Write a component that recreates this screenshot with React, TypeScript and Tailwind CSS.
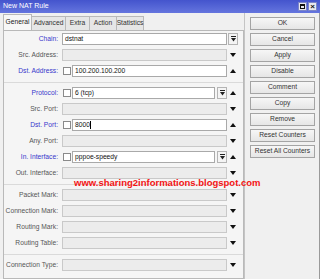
import React from 'react';

type Tail = 'up' | 'down' | 'box';

type Row = {
  label: string;
  blue?: boolean;
  check?: boolean;
  value?: string;
  combo?: boolean;
  caret?: boolean;
  tail: Tail;
};

const groups: Row[][] = [
  [
    { label: 'Chain:', blue: true, value: 'dstnat', tail: 'box' },
    { label: 'Src. Address:', tail: 'down' },
    { label: 'Dst. Address:', blue: true, check: true, value: '100.200.100.200', tail: 'up' },
  ],
  [
    { label: 'Protocol:', blue: true, check: true, value: '6 (tcp)', combo: true, tail: 'up' },
    { label: 'Src. Port:', tail: 'down' },
    { label: 'Dst. Port:', blue: true, check: true, value: '8000', caret: true, tail: 'up' },
    { label: 'Any. Port:', tail: 'down' },
    { label: 'In. Interface:', blue: true, check: true, value: 'pppoe-speedy', combo: true, tail: 'up' },
    { label: 'Out. Interface:', tail: 'down' },
  ],
  [
    { label: 'Packet Mark:', tail: 'down' },
    { label: 'Connection Mark:', tail: 'down' },
    { label: 'Routing Mark:', tail: 'down' },
    { label: 'Routing Table:', tail: 'down' },
  ],
  [{ label: 'Connection Type:', tail: 'down' }],
];

const tabs = [
  { name: 'General', w: 'w-[29px]' },
  { name: 'Advanced', w: 'w-[35px]' },
  { name: 'Extra', w: 'w-[25px]' },
  { name: 'Action', w: 'w-[28px]' },
  { name: 'Statistics', w: 'w-[28px]' },
];

const buttons = ['OK', 'Cancel', 'Apply', 'Disable', 'Comment', 'Copy', 'Remove', 'Reset Counters', 'Reset All Counters'];

function Tri({ up }: { up?: boolean }) {
  return (
    <svg width="6" height="4" viewBox="0 0 6 4" className="ml-[3px] shrink-0">
      <path d={up ? 'M0 4 L3 0 L6 4 Z' : 'M0 0 L6 0 L3 4 Z'} fill="#111" />
    </svg>
  );
}

function ComboBox({ className }: { className: string }) {
  return (
    <div className={`h-[12px] w-[10px] shrink-0 border border-[#b4b4b4] bg-[#f4f4f4] flex items-center justify-center ${className}`}>
      <svg width="5" height="6" viewBox="0 0 5 6">
        <rect x="0" y="0" width="5" height="1" fill="#222" />
        <path d="M0 2 L5 2 L2.5 5.5 Z" fill="#222" />
      </svg>
    </div>
  );
}

function FieldRow({ row }: { row: Row }) {
  const enabled = !!row.value;
  const width = row.check ? (row.combo ? 'w-[143px]' : 'w-[155px]') : 'w-[165px]';
  return (
    <div className="flex h-[12px] items-center">
      <div className={`w-[55px] text-right pr-[1px] leading-[12px] ${row.blue ? 'text-[#3838cc]' : 'text-[#555]'}`}>
        {row.label}
      </div>
      {row.check ? (
        <div className="ml-[4px] h-[8px] w-[8px] shrink-0 border border-[#8a8a8a] bg-white" />
      ) : null}
      <div
        className={`${row.check ? 'ml-[1px]' : 'ml-[3px]'} ${width} h-[12px] shrink-0 flex items-center pl-[2px] leading-[10px] ${
          enabled ? 'border border-[#a9a9a9] bg-white text-[#111]' : 'border border-[#c9c9c9] bg-[#ececec]'
        }`}
      >
        {row.value}
        {row.caret ? <span className="ml-[0.5px] inline-block h-[8px] w-px bg-black" /> : null}
      </div>
      {row.combo ? <ComboBox className="ml-[2px]" /> : null}
      {row.tail === 'box' ? <ComboBox className="ml-[1px]" /> : <Tri up={row.tail === 'up'} />}
    </div>
  );
}

export default function App() {
  return (
    <div className="relative h-[279px] w-[320px] overflow-hidden bg-[#f0f0f0] font-['Liberation_Sans',Arial,sans-serif] text-[6.7px] text-[#333]">
      {/* title bar */}
      <div className="flex h-[13px] items-center bg-gradient-to-b from-[#4454cd] to-[#6575de] pl-[3px] pr-[3px]">
        <span className="text-[7px] text-white">New NAT Rule</span>
        <div className="ml-auto flex gap-[1px]">
          <div className="flex h-[9px] w-[9px] items-center justify-center border border-[#7c86c8] bg-[#e8e8ee]">
            <div className="h-[5px] w-[5px] border border-[#111] border-t-2" />
          </div>
          <div className="flex h-[9px] w-[9px] items-center justify-center border border-[#7c86c8] bg-[#e8e8ee] text-[8px] font-bold leading-none text-[#111]">
            ×
          </div>
        </div>
      </div>

      <div className="flex h-[266px] border-r border-[#9a9a9a]">
        {/* left: tabs + form */}
        <div className="flex w-[244px] flex-col pl-[3px] pt-[1px]">
          <div className="flex h-[16px] items-end">
            {tabs.map((t, i) => (
              <div
                key={t.name}
                className={`${t.w} flex items-center justify-center border border-b-0 border-[#b9b9b9] ${
                  i === 0 ? 'h-[16px] bg-[#f7f7f7] text-[#222]' : 'h-[14px] -ml-px bg-[#e6e6e6] text-[#333]'
                }`}
              >
                {t.name}
              </div>
            ))}
          </div>
          <div className="flex flex-1 flex-col gap-[4px] border border-[#b9b9b9] bg-[#f5f5f5] pt-[2px]">
            {groups.map((g, gi) => (
              <React.Fragment key={gi}>
                {gi > 0 ? <div className="h-[2px] border-b border-[#dadada]" /> : null}
                {g.map((r) => (
                  <FieldRow key={r.label} row={r} />
                ))}
              </React.Fragment>
            ))}
          </div>
        </div>

        {/* right: buttons */}
        <div className="flex flex-1 flex-col gap-[3px] border-l border-[#c4c4c4] pl-[5px] pt-[4px]">
          {buttons.map((b) => (
            <div
              key={b}
              className="flex h-[13px] w-[65px] items-center justify-center border border-[#a4a4a4] bg-gradient-to-b from-[#f6f6f6] to-[#e6e6e6] text-[#333]"
            >
              {b}
            </div>
          ))}
        </div>
      </div>

      {/* watermark */}
      <div className="absolute left-[74px] top-[178px] text-[9.5px] font-bold leading-none text-[#f41414]">
        www.sharing2informations.blogspot.com
      </div>
    </div>
  );
}
